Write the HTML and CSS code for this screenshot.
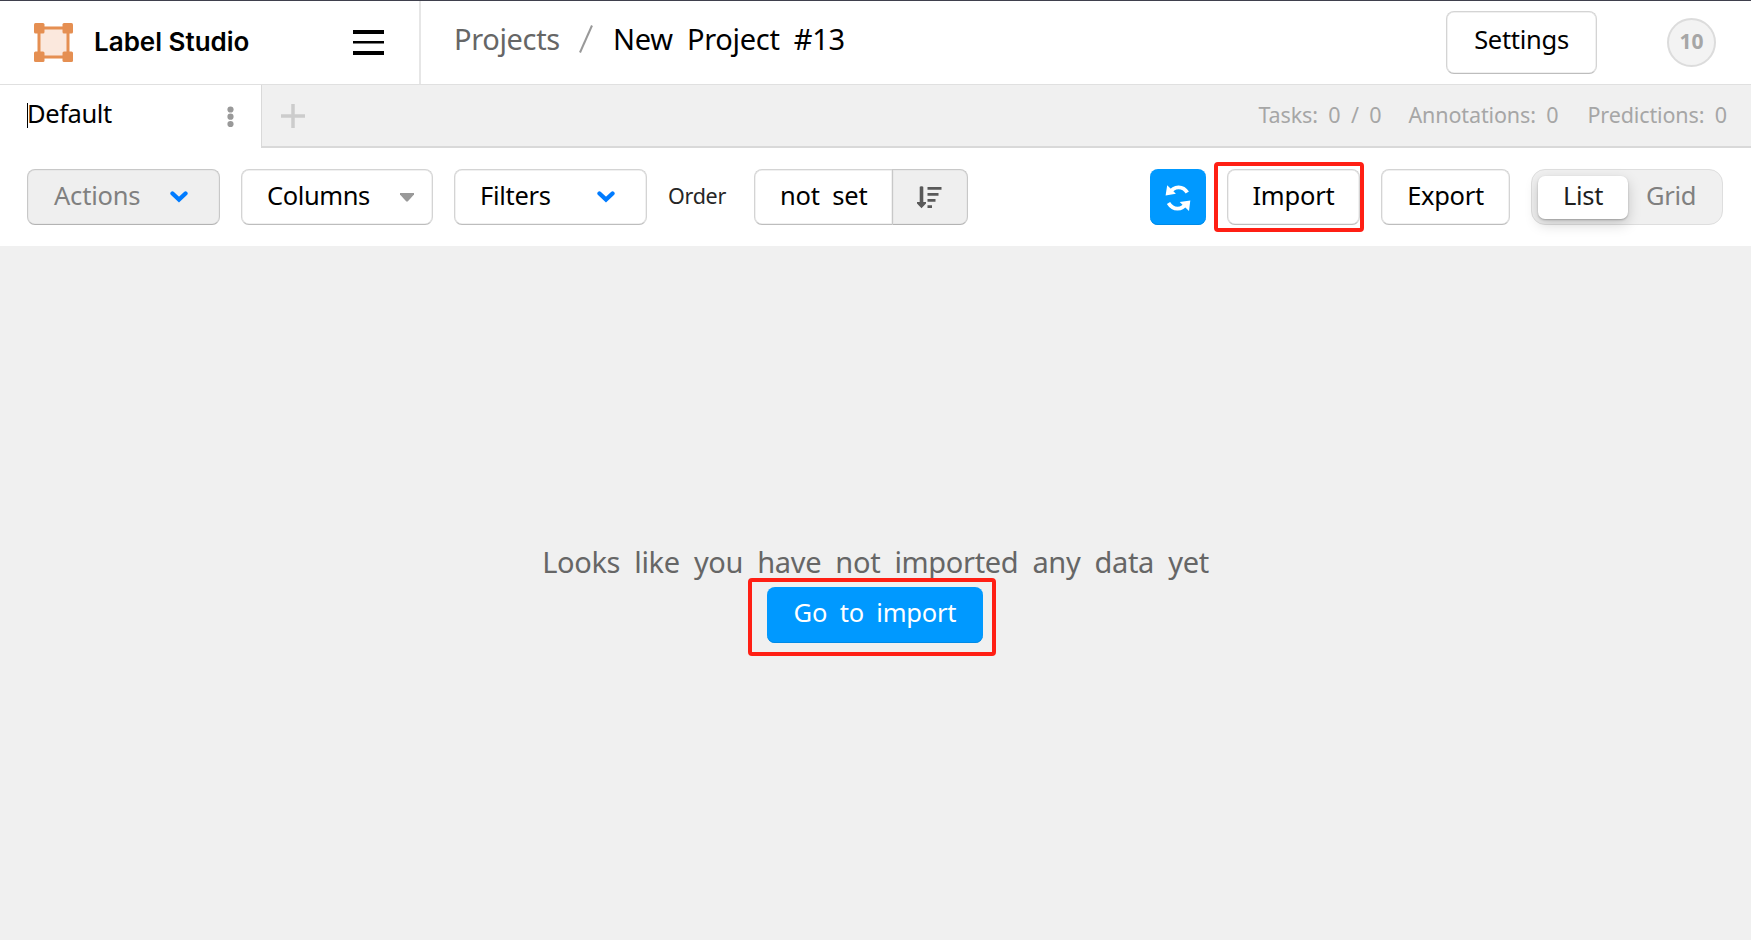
FILE: index.html
```html
<!DOCTYPE html>
<html lang="en">
<head>
<meta charset="utf-8">
<title>Label Studio</title>
<link rel="stylesheet" href="styles.css">
</head>
<body>
<div class="app">
  <header class="header">
    <div class="brand">
      <svg class="logo" width="39" height="39" viewBox="0 0 39 39">
        <rect x="5" y="5" width="29" height="29" fill="#fbe8dd" stroke="#e58f52" stroke-width="3"/>
        <path d="M8 3.5h23M8 35.5h23" stroke="#f3c4a3" stroke-width="1"/>
        <g fill="#e58f52"><rect width="10.5" height="10.5" rx="1.5"/><rect x="28.500" width="10.500" height="10.500" rx="1.500"/><rect y="28.500" width="10.500" height="10.500" rx="1.500"/><rect x="28.500" y="28.500" width="10.500" height="10.500" rx="1.500"/></g>
      </svg>
      <span class="brand-name">Label Studio</span>
      <svg class="burger" width="31" height="25" viewBox="0 0 31 25"><path d="M0 0h31v4H0zM0 11h31v2.500H0zM0 21h31v4H0z"/></svg>
    </div>
    <nav class="crumbs">
      <span class="crumb">Projects</span>
      <svg class="slash" width="14" height="28" viewBox="0 0 14 28"><path d="M1 27.500L13 .5" stroke="#999" stroke-width="2"/></svg>
      <span class="current">New Project #13</span>
    </nav>
    <button class="btn settings"><span>Settings</span></button>
    <div class="avatar"><span>10</span></div>
  </header>

  <div class="tabs">
    <div class="tab">
      <span class="caret"></span><span class="tab-name">Default</span>
      <svg class="dots" width="7" height="22" viewBox="0 0 7 22" fill="#999"><circle cx="3.500" cy="3.500" r="3.100"/><circle cx="3.500" cy="10.700" r="3.100"/><circle cx="3.500" cy="18" r="3.100"/></svg>
    </div>
    <div class="tab-rest">
      <svg width="24" height="24" viewBox="0 0 24 24"><path d="M12 0v24M0 12h24" stroke="#ccc" stroke-width="3.500"/></svg>
      <div class="stats"><span class="s-tasks">Tasks: 0 / 0</span><span class="s-ann">Annotations: 0</span><span class="s-pred">Predictions: 0</span></div>
    </div>
  </div>

  <div class="toolbar">
    <button class="btn actions"><span>Actions</span><svg width="18" height="12" viewBox="0 0 18 12"><path d="M2.500 2.500L9 8.500l6.500-6" fill="none" stroke="#007bff" stroke-width="4.300" stroke-linecap="round"/></svg></button>
    <button class="btn columns"><span>Columns</span><svg width="14" height="9" viewBox="0 0 14 9"><path d="M0 0h14v1.500L7.700 8.500H6.300L0 1.500z" fill="#999"/></svg></button>
    <button class="btn filters"><span>Filters</span><svg width="18" height="12" viewBox="0 0 18 12"><path d="M2.500 2.500L9 8.500l6.500-6" fill="none" stroke="#007bff" stroke-width="4.300" stroke-linecap="round"/></svg></button>
    <span class="order">Order</span>
    <div class="order-group">
      <button class="btn notset"><span>not set</span></button>
      <button class="btn sort"><svg width="26" height="23" viewBox="0 0 26 23"><path d="M3.700 1q0-.8 1.800-.8t1.800.8v15h2.700v1.500L5.500 22.200 1 17.500V16h2.700zM11.500 1h14v2.700h-14zM11.500 7h11v2.700h-11zM11.500 13h8v2.700h-8zM11.500 19.200h4.500v2.700h-4.500z" fill="#595959"/></svg></button>
    </div>
    <div class="right">
      <button class="refresh"><svg width="26" height="28" viewBox="0 0 26 28"><path d="M4.500 9C9 1.500 18 1.500 22.300 8.500M21.500 19C17 26.500 8 26.500 3.500 19" fill="none" stroke="#fff" stroke-width="3.800"/><path d="M2.200 1.300L.6 11.500 10.900 9.800zM25.300 16.500L24 27 14.700 18z" fill="#fff"/></svg></button>
      <button class="btn import"><span>Import</span></button>
      <button class="btn export"><span>Export</span></button>
      <div class="toggle"><span class="opt on"><span>List</span></span><span class="opt off"><span>Grid</span></span></div>
      <div class="mark mark-import"></div>
    </div>
  </div>

  <main class="empty">
    <p class="message">Looks like you have not imported any data yet</p>
    <div class="go-wrap"><button class="go"><span>Go to import</span></button><div class="mark mark-go"></div></div>
  </main>
</div>
</body>
</html>
```
FILE: styles.css
```css
* { box-sizing: border-box; }
body { margin: 0; font-family: "Noto Sans", "Open Sans", sans-serif; color: #000; background: #f0f0f0; }
button { font: inherit; color: inherit; padding: 0; margin: 0; }
svg { display: block; flex: none; }
span { white-space: nowrap; }
.app { width: 1751px; height: 940px; display: flex; flex-direction: column; overflow: hidden; font-size: 25.5px; }

.header { height: 85px; flex: none; display: flex; align-items: center; background: #fff; border-top: 1px solid #3f404d; border-bottom: 1px solid #e0e0e0; }
.brand { width: 421px; height: 83px; display: flex; align-items: center; padding-left: 34px; border-right: 2px solid #e6e6e6; }
.brand-name { width: 280px; padding-left: 21px; font: 600 26px/30px Inter, sans-serif; letter-spacing: 0; padding-bottom: 1px; }
.crumbs { width: 1025px; display: flex; align-items: center; padding: 0 0 7px 33px; font-size: 29px; line-height: 40px; }
.crumb { width: 125px; color: #666; letter-spacing: -0.35px; }
.slash { margin-right: 20px; }
.current { letter-spacing: -0.3px; word-spacing: 7px; }

.btn { height: 56px; display: flex; align-items: center; background: #fff; border: 1.500px solid #d4d4d4; border-bottom-color: #bdbdbd; border-radius: 8px; box-shadow: inset 0 0 0 .5px #e2e2e2; }
.btn span { padding-bottom: 4px; }
.settings { width: 151px; height: 63px; justify-content: center; }
.settings span { letter-spacing: -0.3px; padding-bottom: 7px; }
.avatar { width: 49px; height: 49px; margin-left: 70px; border: 2px solid #dcdcdc; border-radius: 50%; background: #f3f3f3; color: #a6a6a6; font-weight: 700; font-size: 21px; line-height: 42px; text-align: center; }

.tabs { height: 63px; flex: none; display: flex; background: #fff; }
.tab { width: 261px; display: flex; align-items: center; padding-left: 27px; }
.caret { width: 1px; height: 25px; background: #000; margin-bottom: 2px; }
.tab-name { width: 200px; margin-left: -1px; padding-bottom: 7px; letter-spacing: -0.4px; }
.tab-rest { flex: 1; display: flex; align-items: center; justify-content: space-between; padding: 0 24px 0 19px; background: #f0f0f0; border-left: 1px solid #d9d9d9; border-bottom: 2px solid #d9d9d9; }
.stats { display: flex; color: #a6a6a6; font-size: 21.5px; padding-bottom: 2px; letter-spacing: -0.12px; }
.s-tasks { width: 150px; word-spacing: 5px; }
.s-ann { width: 179px; word-spacing: 5px; }
.s-pred { word-spacing: 5px; }

.toolbar { height: 98px; flex: none; display: flex; align-items: center; padding: 0 28px 0 27px; background: #fff; }
.actions, .columns, .filters { width: 193px; justify-content: space-between; padding: 0 31px 0 25px; margin-right: 21px; letter-spacing: -0.3px; }
.actions { background: #efefef; color: #808080; border-color: #c8c8c8; border-bottom-color: #b3b3b3; padding-left: 26px; letter-spacing: -0.2px; }
.columns { width: 192px; padding-right: 18px; letter-spacing: -0.4px; }
.filters { margin-right: 20px; }
.order { width: 87px; padding-left: 1px; font-size: 21.500px; color: #262626; padding-bottom: 3px; letter-spacing: -0.3px; }
.order-group { display: flex; }
.notset { width: 138px; border-radius: 8px 0 0 8px; border-right: 0; padding-left: 25px; word-spacing: 6px; letter-spacing: -0.2px; }
.sort { width: 76px; border-radius: 0 8px 8px 0; background: #efefef; border-color: #c8c8c8; border-bottom-color: #b3b3b3; padding-left: 23px; }
.right { margin-left: auto; display: flex; position: relative; }
.refresh { width: 56px; height: 56px; border: 0; border-radius: 8px; background: #0099ff; box-shadow: inset 0 -1px #008ae6; padding: 1px 0 0 15px; margin-right: 21px; }
.import { width: 133px; justify-content: center; margin-right: 21px; letter-spacing: -0.2px; }
.export { width: 129px; justify-content: center; margin-right: 21px; letter-spacing: -0.3px; }
.toggle { width: 192px; height: 56px; display: flex; align-items: center; padding-left: 6px; background: #f0f0f0; border: 1.500px solid #dedede; border-radius: 14px; }
.opt { height: 43px; display: flex; justify-content: center; align-items: center; }
.opt span { padding-bottom: 5px; letter-spacing: -0.3px; }
.on { width: 90px; background: #fff; border-radius: 7px; color: #1f1f1f; box-shadow: 0 1px 2px rgba(0,0,0,.25), 0 5px 14px rgba(0,0,0,.18); }
.off { width: 86px; color: #808080; }
.mark { position: absolute; border: 4px solid #ff1f14; border-radius: 4px; }
.mark-import { left: 64px; top: -7px; width: 150px; height: 70px; }

.empty { flex: 1; display: flex; flex-direction: column; align-items: center; padding-top: 296px; }
.message { margin: 0; height: 45px; font-size: 29px; line-height: 40px; color: #666; word-spacing: 7px; letter-spacing: -0.35px; white-space: nowrap; }
.go-wrap { position: relative; margin-right: 1px; }
.go { width: 216px; height: 56px; border: 0; border-radius: 8px; background: #0099ff; box-shadow: inset 0 -1px #008ae6; color: #fff; display: flex; align-items: center; justify-content: center; }
.go span { padding-bottom: 6px; word-spacing: 6px; letter-spacing: -0.2px; }
.mark-go { left: -19px; top: -9px; width: 248px; height: 78px; }
```
